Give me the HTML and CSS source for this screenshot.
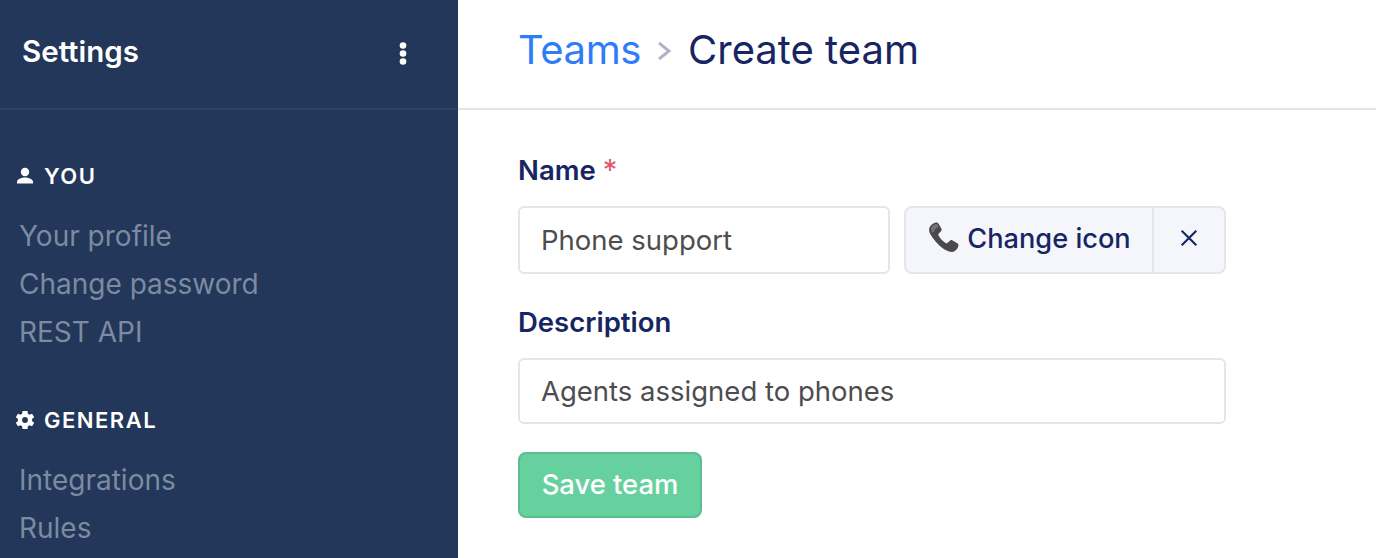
FILE: index.html
```html
<!DOCTYPE html>
<html lang="en">
<head>
    <meta charset="UTF-8">
    <meta name="viewport" content="width=device-width, initial-scale=1.0">
    <title>Create team</title>
    <link rel="stylesheet" href="styles.css">
</head>
<body>
    <aside class="sidebar">
        <div class="sidebar-head">
            <span class="sidebar-title">Settings</span>
            <svg class="dots" width="10" height="23" viewBox="0 0 10 23"><circle cx="5" cy="3.500" r="3.300"/><circle cx="5" cy="11.500" r="3.300"/><circle cx="5" cy="19.500" r="3.300"/></svg>
        </div>
        <nav class="sidebar-nav">
            <div class="nav-group">
                <h3 class="nav-heading">
                    <svg class="nav-icon" width="20" height="20" viewBox="0 0 20 20"><circle cx="10" cy="6" r="4.200"/><path d="M2 17.500v-1.500c0-3 4.500-4.500 8-4.500s8 1.500 8 4.500v1.500z"/></svg>
                    YOU
                </h3>
                <a class="nav-link">Your profile</a>
                <a class="nav-link">Change password</a>
                <a class="nav-link">REST API</a>
            </div>
            <div class="nav-group">
                <h3 class="nav-heading">
                    <svg class="nav-icon" width="20" height="20" viewBox="0 0 24 24"><path fill-rule="evenodd" d="M20.400 13.200c.1-.4.100-.8.100-1.200s0-.8-.1-1.200l2.600-2-2.500-4.300-3 1.200c-.6-.5-1.300-.9-2.100-1.200L15 1.300h-6l-.4 3.200c-.8.300-1.500.7-2.100 1.200l-3-1.200L1 8.800l2.600 2c-.1.400-.1.800-.1 1.200s0 .8.100 1.200l-2.600 2 2.500 4.300 3-1.200c.6.500 1.300.9 2.100 1.200l.4 3.200h6l.4-3.200c.8-.3 1.500-.7 2.100-1.200l3 1.200 2.500-4.300zM12 15.500a3.500 3.500 0 1 1 0-7 3.500 3.500 0 0 1 0 7z"/></svg>
                    GENERAL
                </h3>
                <a class="nav-link">Integrations</a>
                <a class="nav-link">Rules</a>
            </div>
        </nav>
    </aside>
    <main class="main">
        <header class="page-head">
            <a class="crumb-link">Teams</a>
            <svg class="crumb-sep" width="15" height="20" viewBox="0 0 15 20"><path d="M2 2l10 8-10 8" fill="none" stroke="#b1b3c9" stroke-width="3"/></svg>
            <span class="crumb-current">Create team</span>
        </header>
        <form class="team-form">
            <label class="field-label">Name <span class="required">*</span></label>
            <div class="name-row">
                <input class="text-input name-input" type="text" value="Phone support">
                <div class="icon-picker">
                    <button type="button" class="icon-change">
                        <svg class="phone" width="34" height="34" viewBox="0 0 34 34"><path fill="#4a4a4c" d="M3 5.500C5 3 7.500 1.500 9.500 1.500c1.200 0 1.800 .7 2.400 1.700l2.400 4.300c.6 1.100 .4 2-.5 2.900l-2 2c-.6.600-.6 1.200-.2 2 1.500 2.800 4.300 5.900 7 7.500 .8.500 1.500.5 2.100-.1l1.900-1.900c.9-.9 1.900-1.100 3-.5l4.300 2.500c1.100.6 1.700 1.300 1.600 2.400-.1 2-1.700 4.500-4 6-2.500 1.500-6.500 .5-11.500-2.800C11 24 6.500 18.500 3.500 13.500 1.800 10.500 1.700 7.500 3 5.500z"/><path fill="#757578" d="M4.500 6C6 4 8 3 9.500 3c.5 0 1 .3 1.300 1l1 1.800c-2 .5-4.500 2.500-5 5l-1.500 1C4 9.500 3.800 7.500 4.500 6z"/></svg>
                        Change icon
                    </button>
                    <button type="button" class="icon-clear">
                        <svg width="18" height="18" viewBox="0 0 16 16"><path d="M1.500 1.500l13 13M14.500 1.500l-13 13" fill="none" stroke="#172563" stroke-width="1.900"/></svg>
                    </button>
                </div>
            </div>
            <label class="field-label desc-label">Description</label>
            <input class="text-input desc-input" type="text" value="Agents assigned to phones">
            <button type="button" class="save-btn">Save team</button>
        </form>
    </main>
</body>
</html>
```

FILE: styles.css
```css
* {
    box-sizing: border-box;
}
html, body {
    height: 100%;
}
body {
    margin: 0;
    display: flex;
    overflow: hidden;
    font-family: 'Inter', sans-serif;
    background-color: #fff;
}
.sidebar {
    width: 458px;
    flex-shrink: 0;
    background-color: #223759;
}
.sidebar-head {
    height: 110px;
    padding: 0 50px 6px 22px;
    display: flex;
    align-items: center;
    justify-content: space-between;
    border-bottom: 2px solid #2b4165;
}
.sidebar-title {
    color: #fff;
    font-size: 29.5px;
    font-weight: 600;
}
.dots {
    fill: #fff;
    margin-top: 4px;
}
.sidebar-nav {
    padding-top: 52px;
}
.nav-group {
    margin-bottom: 50px;
}
.nav-heading {
    margin: 0 0 22px;
    height: 28px;
    display: flex;
    align-items: center;
    gap: 9px;
    padding-left: 15px;
    color: #fff;
    font-size: 22px;
    font-weight: 600;
    letter-spacing: 1.5px;
}
.nav-icon {
    fill: #fff;
}
.nav-link {
    display: block;
    padding-left: 19px;
    height: 48px;
    line-height: 48px;
    color: #7c8aa2;
    font-size: 28px;
}
.main {
    flex: 1;
}
.page-head {
    height: 110px;
    padding: 0 0 10px 60px;
    display: flex;
    align-items: center;
    gap: 16px;
    border-bottom: 2px solid #e3e3ea;
    font-size: 40px;
}
.crumb-link {
    color: #2f7df6;
    letter-spacing: -0.4px;
}
.crumb-sep {
    margin-top: 4px;
}
.crumb-current {
    color: #172563;
}
.team-form {
    padding: 44px 0 0 60px;
    width: 768px;
}
.field-label {
    display: block;
    color: #172563;
    font-size: 27.5px;
    font-weight: 600;
    line-height: 32px;
}
.required {
    color: #e2596b;
    font-size: 29px;
    font-weight: 400;
    line-height: 1;
}
.name-row {
    display: flex;
    gap: 14px;
    margin-top: 20px;
}
.text-input {
    height: 68px;
    padding: 0 21px;
    border: 2px solid #e4e4ea;
    border-radius: 6px;
    background-color: #fff;
    color: #4d4d4f;
    font-family: 'Inter', sans-serif;
    font-size: 27.5px;
    outline: none;
}
.name-input {
    width: 372px;
}
.icon-picker {
    flex: 1;
    display: flex;
    height: 68px;
    border: 2px solid #e4e4ea;
    border-radius: 8px;
    background-color: #f5f6fb;
}
.icon-picker button {
    border: none;
    background: none;
    padding: 0;
    color: #172563;
    font-family: 'Inter', sans-serif;
    font-size: 27.2px;
    font-weight: 500;
    display: flex;
    align-items: center;
    justify-content: center;
}
.icon-change {
    flex: 1;
    gap: 6px;
    padding-bottom: 4px !important;
    border-right: 2px solid #e4e4ea !important;
}
.icon-clear {
    width: 70px;
    padding-bottom: 4px !important;
}
.desc-label {
    margin-top: 32px;
}
.desc-input {
    display: block;
    width: 100%;
    height: 66px;
    margin-top: 20px;
}
.save-btn {
    display: block;
    width: 184px;
    height: 66px;
    margin-top: 28px;
    padding: 0 0 2px;
    border: 2px solid #5cbd91;
    border-radius: 8px;
    background-color: #66d19f;
    color: #fff;
    font-family: 'Inter', sans-serif;
    font-size: 27.4px;
    font-weight: 500;
}
```
